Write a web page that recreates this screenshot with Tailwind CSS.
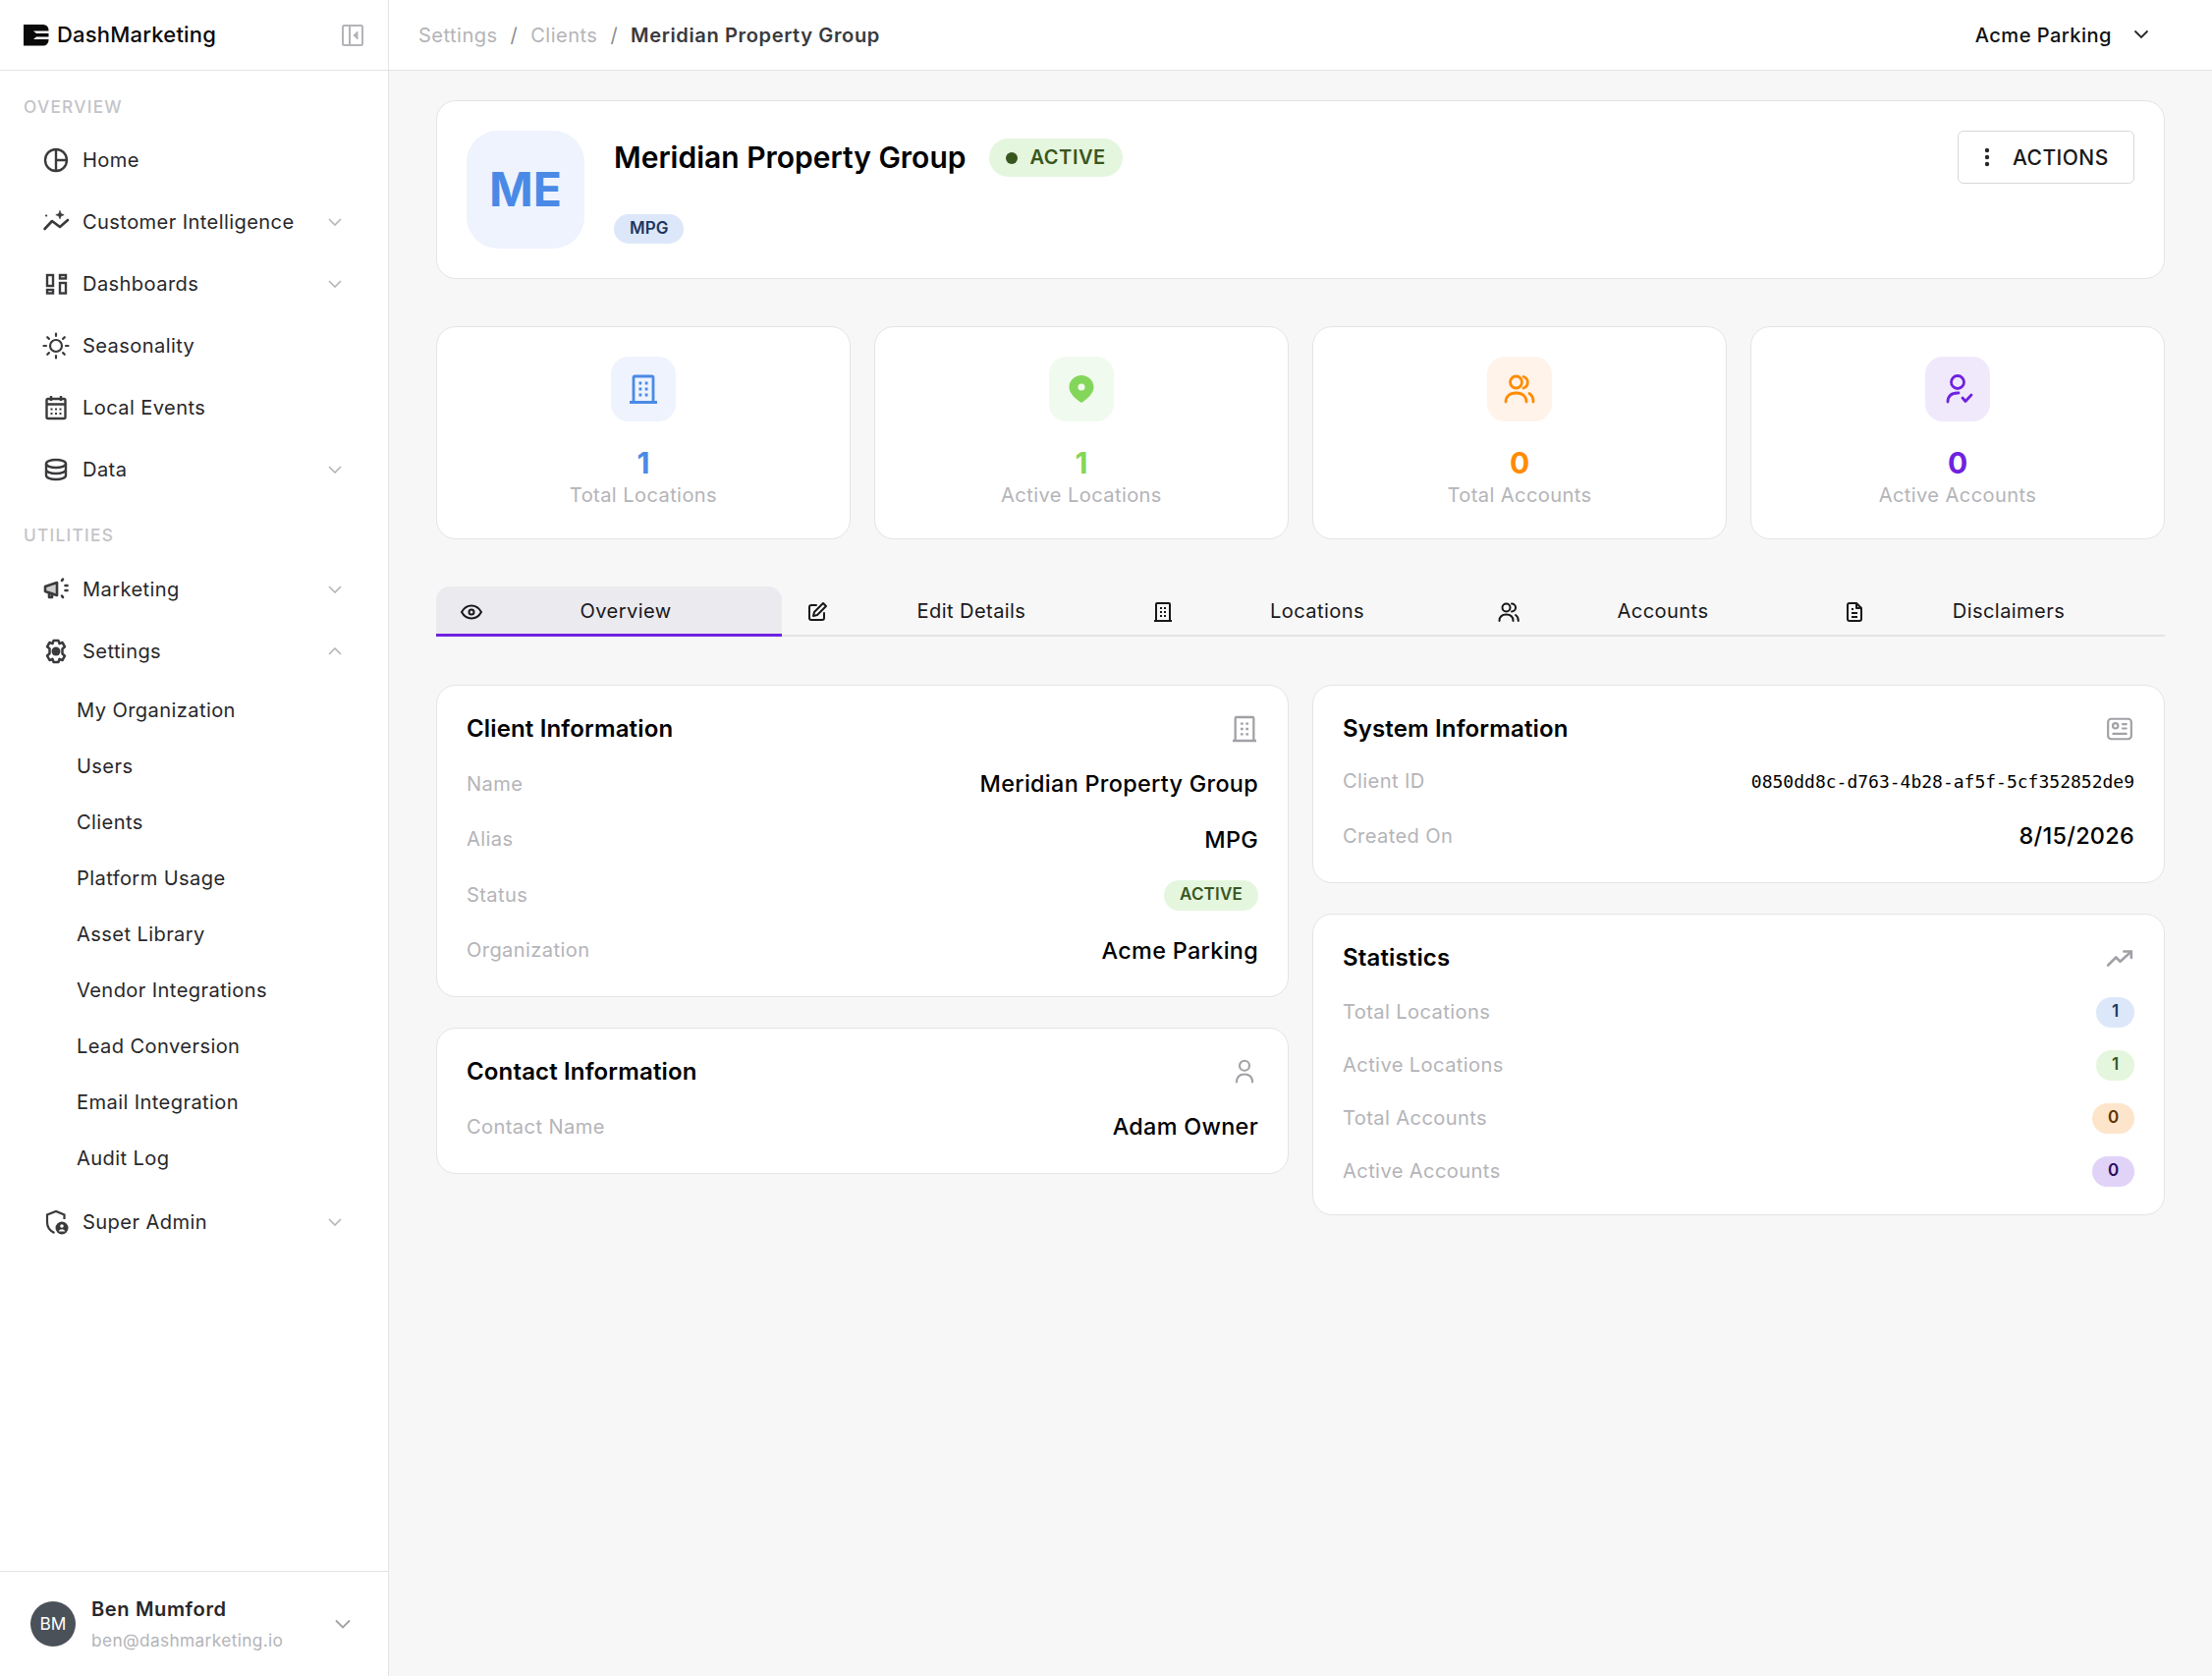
<!DOCTYPE html>
<html lang="en">
<head>
    <meta charset="UTF-8">
    <title>Meridian Property Group</title>
    <script src="https://cdn.jsdelivr.net/npm/@tailwindcss/browser@4"></script>
</head>
<body class="bg-[#f7f7f7] text-black font-['Inter',sans-serif]">
<div class="flex h-[1706px] w-[2252px] overflow-hidden">

    <!-- sidebar -->
    <aside class="w-[396px] shrink-0 bg-white border-r border-[#e4e4e7] flex flex-col">
        <div class="h-[72px] shrink-0 border-b border-[#e4e4e7] flex items-center justify-between pl-[24px] pr-[25px]">
            <div class="flex items-center gap-[8px]">
                <svg width="26" height="22" viewBox="0 0 26 22"><path fill="#0a0a0a" fill-rule="evenodd" d="M0 0h20a5.500 5.500 0 0 1 5.500 5.500V16a5.500 5.500 0 0 1-5.500 5.500H0zM10 6.500h15.500v2.500H13zM13 12.500h12.500V15H10z"/></svg>
                <span class="text-[22px] font-medium tracking-[0.2px] text-[#0a0a0a]">DashMarketing</span>
            </div>
            <svg width="22" height="22" viewBox="0 0 22 22" fill="none" stroke="#b4b4b8" stroke-width="2"><rect x="1" y="1" width="20" height="20" rx="1.500"/><path d="M8 1v20"/><path d="M16 7l-4 4 4 4z" fill="#b4b4b8" stroke-width="1"/></svg>
        </div>

        <nav class="flex-1 text-[#27272a] text-[20.100px] tracking-[0.4px]">
            <div class="mt-[22px] mb-[9px] pl-[24px] h-[28px] leading-[29px] text-[17.300px] tracking-[1.250px] font-medium text-[#c4c4c8]">OVERVIEW</div>

            <div class="h-[63px] flex items-center pl-[43px] pr-[47px]">
                <svg class="w-[28px] h-[28px] shrink-0" viewBox="0 0 28 28" fill="none" stroke="#3a3a3d" stroke-width="2.400"><circle cx="14" cy="14" r="11"/><path d="M14 3v22M14 14h11"/></svg>
                <span class="ml-[13px] mt-[2px]">Home</span>
            </div>
            <div class="h-[63px] flex items-center pl-[43px] pr-[47px]">
                <svg class="w-[28px] h-[28px] shrink-0" viewBox="0 0 28 28" fill="none" stroke="#3a3a3d" stroke-width="2.600" stroke-linecap="round" stroke-linejoin="round"><path d="M2.500 21l7.500-8 8 6 8-7"/><path d="M18 2.500l1.200 3 3 1.200-3 1.200-1.200 3-1.200-3-3-1.200 3-1.200z" fill="#3a3a3d" stroke-width="0.600"/><path d="M4 7.500h.2" stroke-width="2"/></svg>
                <span class="ml-[13px] mt-[2px] flex-1">Customer Intelligence</span>
                <svg width="14" height="8" viewBox="0 0 14 8" fill="none" stroke="#b4b4b8" stroke-width="1.600"><path d="M1 1l6 6 6-6"/></svg>
            </div>
            <div class="h-[63px] flex items-center pl-[43px] pr-[47px]">
                <svg class="w-[28px] h-[28px] shrink-0" viewBox="0 0 28 28" fill="none" stroke="#3a3a3d" stroke-width="2.400"><rect x="5" y="5" width="6" height="11"/><rect x="5" y="20" width="6" height="3.500"/><rect x="18" y="5" width="6" height="3.500"/><rect x="18" y="13" width="6" height="10.500"/></svg>
                <span class="ml-[13px] mt-[2px] flex-1">Dashboards</span>
                <svg width="14" height="8" viewBox="0 0 14 8" fill="none" stroke="#b4b4b8" stroke-width="1.600"><path d="M1 1l6 6 6-6"/></svg>
            </div>
            <div class="h-[63px] flex items-center pl-[43px] pr-[47px]">
                <svg class="w-[28px] h-[28px] shrink-0" viewBox="0 0 28 28" fill="none" stroke="#3a3a3d" stroke-width="2.200" stroke-linecap="round"><circle cx="14" cy="14" r="6"/><path d="M14 1.500v2.500M14 24v2.500M1.500 14H4M24 14h2.500M5.200 5.200l1.700 1.700M21.100 21.100l1.700 1.700M5.200 22.800l1.700-1.700M21.100 6.900l1.700-1.700"/></svg>
                <span class="ml-[13px] mt-[2px]">Seasonality</span>
            </div>
            <div class="h-[63px] flex items-center pl-[43px] pr-[47px]">
                <svg class="w-[28px] h-[28px] shrink-0" viewBox="0 0 28 28" fill="none" stroke="#3a3a3d" stroke-width="2.400"><rect x="4.500" y="5" width="19" height="20" rx="1.500"/><path d="M4.500 10.500h19M9 2v5M19 2v5"/><path d="M8.500 15.500h2M13 15.500h2M17.500 15.500h2M8.500 20h2M13 20h2M17.500 20h2" stroke-width="1.800"/></svg>
                <span class="ml-[13px] mt-[2px]">Local Events</span>
            </div>
            <div class="h-[63px] flex items-center pl-[43px] pr-[47px]">
                <svg class="w-[28px] h-[28px] shrink-0" viewBox="0 0 28 28" fill="none" stroke="#3a3a3d" stroke-width="2.400"><ellipse cx="14" cy="8" rx="10" ry="4"/><path d="M4 8v12c0 2.200 4.500 4 10 4s10-1.800 10-4V8M4 14c0 2.200 4.500 4 10 4s10-1.800 10-4"/></svg>
                <span class="ml-[13px] mt-[2px] flex-1">Data</span>
                <svg width="14" height="8" viewBox="0 0 14 8" fill="none" stroke="#b4b4b8" stroke-width="1.600"><path d="M1 1l6 6 6-6"/></svg>
            </div>

            <div class="mt-[21px] mb-[10px] pl-[24px] h-[28px] leading-[29px] text-[17.300px] tracking-[1.250px] font-medium text-[#c4c4c8]">UTILITIES</div>

            <div class="h-[63px] flex items-center pl-[43px] pr-[47px]">
                <svg class="w-[28px] h-[28px] shrink-0" viewBox="0 0 28 28" fill="none" stroke="#3a3a3d" stroke-width="2.600" stroke-linecap="round" stroke-linejoin="round"><path d="M3 11l12-4v13L3 16z" fill="#3a3a3d" fill-opacity="0.250"/><path d="M7 17v5h3v-4"/><path d="M20 5l1-1.500M23.500 10h2M23.500 15h2M20 20.500l1 1.500"/></svg>
                <span class="ml-[13px] mt-[2px] flex-1">Marketing</span>
                <svg width="14" height="8" viewBox="0 0 14 8" fill="none" stroke="#b4b4b8" stroke-width="1.600"><path d="M1 1l6 6 6-6"/></svg>
            </div>
            <div class="h-[63px] flex items-center pl-[43px] pr-[47px]">
                <svg class="w-[28px] h-[28px] shrink-0" viewBox="0 0 28 28" fill="none" stroke="#3a3a3d" stroke-width="2.500" stroke-linejoin="round"><path d="M11.500 3h5l1 3.200 3-1.200 2.500 4.300-2.500 2.200v5l2.500 2.200L20.500 23l-3-1.200-1 3.200h-5l-1-3.200-3 1.200L5 18.500l2.500-2.200v-5L5 9.300 7.500 5l3 1.200z"/><circle cx="14" cy="14" r="4.500" fill="#3a3a3d" stroke="none"/></svg>
                <span class="ml-[13px] mt-[2px] flex-1">Settings</span>
                <svg width="14" height="8" viewBox="0 0 14 8" fill="none" stroke="#b4b4b8" stroke-width="1.600"><path d="M1 7l6-6 6 6"/></svg>
            </div>
            <div class="h-[57px] flex items-center pl-[78px] pt-[2px]">My Organization</div>
            <div class="h-[57px] flex items-center pl-[78px] pt-[2px]">Users</div>
            <div class="h-[57px] flex items-center pl-[78px] pt-[2px]">Clients</div>
            <div class="h-[57px] flex items-center pl-[78px] pt-[2px]">Platform Usage</div>
            <div class="h-[57px] flex items-center pl-[78px] pt-[2px]">Asset Library</div>
            <div class="h-[57px] flex items-center pl-[78px] pt-[2px]">Vendor Integrations</div>
            <div class="h-[57px] flex items-center pl-[78px] pt-[2px]">Lead Conversion</div>
            <div class="h-[57px] flex items-center pl-[78px] pt-[2px]">Email Integration</div>
            <div class="h-[57px] flex items-center pl-[78px] pt-[2px]">Audit Log</div>
            <div class="mt-[5px] h-[63px] flex items-center pl-[43px] pr-[47px]">
                <svg class="w-[28px] h-[28px] shrink-0" viewBox="0 0 28 28" fill="none" stroke="#3a3a3d" stroke-width="2.200"><path d="M12.500 25C8 23 5 19 5 14V6.500L14 3l8.500 3.500V11"/><circle cx="20" cy="20" r="6.500" fill="#3a3a3d" stroke="none"/><circle cx="20" cy="18" r="1.800" fill="#fff" stroke="none"/><path d="M16.800 23.500c.5-1.500 1.700-2.300 3.200-2.300s2.700.8 3.200 2.300z" fill="#fff" stroke="none"/></svg>
                <span class="ml-[13px] mt-[2px] flex-1">Super Admin</span>
                <svg width="14" height="8" viewBox="0 0 14 8" fill="none" stroke="#b4b4b8" stroke-width="1.600"><path d="M1 1l6 6 6-6"/></svg>
            </div>
        </nav>

        <div class="h-[107px] shrink-0 border-t border-[#e4e4e7] flex items-center pl-[31px] pr-[38px]">
            <div class="w-[46px] h-[46px] rounded-full bg-[#4b5159] text-white text-[17.300px] flex items-center justify-center">BM</div>
            <div class="ml-[16px] flex-1">
                <div class="text-[20.100px] tracking-[0.6px] font-semibold text-[#27272a] leading-[33px]">Ben Mumford</div>
                <div class="text-[17.300px] tracking-[0.36px] text-[#b4b4b8] leading-[30px]">ben@dashmarketing.io</div>
            </div>
            <svg width="16" height="10" viewBox="0 0 16 10" fill="none" stroke="#a1a1a6" stroke-width="1.800"><path d="M1 1.500l7 7 7-7"/></svg>
        </div>
    </aside>

    <div class="flex-1 min-w-0 flex flex-col">
        <!-- top bar -->
        <header class="h-[72px] shrink-0 bg-white border-b border-[#e4e4e7] flex items-center justify-between pl-[30px] pr-[64px] text-[20.100px] tracking-[0.45px]">
            <div class="flex items-center gap-[13px] text-[#b4b4b8] pt-[2px]">
                <span>Settings</span><span class="text-[#8c8c90]">/</span><span>Clients</span><span class="text-[#8c8c90]">/</span><span class="font-semibold text-[#3a3a3d] tracking-[0.6px]">Meridian Property Group</span>
            </div>
            <div class="flex items-center gap-[22px] text-[#111]">
                <span class="font-medium pt-[2px]">Acme Parking</span>
                <svg width="16" height="10" viewBox="0 0 16 10" fill="none" stroke="#27272a" stroke-width="1.800"><path d="M1.500 1.500L8 8l6.500-6.500"/></svg>
            </div>
        </header>

        <main class="px-[48px] pt-[30px]">
            <!-- client header -->
            <section class="h-[182px] bg-white border border-[#e4e4e7] rounded-[20px] pl-[30px] pr-[30px] pt-[30px] flex">
                <div class="w-[120px] h-[120px] rounded-[32px] bg-[#eef3fd] text-[#4a8ae6] text-[48px] font-bold flex items-center justify-center">ME</div>
                <div class="ml-[30px] flex-1">
                    <div class="flex items-center h-[55px] gap-[24px]">
                        <h1 class="text-[30px] font-semibold">Meridian Property Group</h1>
                        <span class="h-[39px] rounded-full bg-[#e5f6de] text-[#38571f] text-[20.100px] tracking-[0.5px] font-semibold px-[17px] flex items-center gap-[12px]"><i class="w-[12px] h-[12px] rounded-full bg-[#38571f]"></i>ACTIVE</span>
                    </div>
                    <span class="mt-[30px] inline-flex items-center h-[30px] px-[16px] rounded-full bg-[#dce8f9] text-[#1f3560] text-[17px] font-semibold">MPG</span>
                </div>
                <button class="w-[180px] h-[54px] border border-[#d8d8dc] rounded-[6px] text-[21px] tracking-[0.45px] font-medium flex items-center pl-[25px] gap-[22px] text-[#18181b]">
                    <svg width="8" height="20" viewBox="0 0 8 20" fill="#27272a"><circle cx="4" cy="3" r="2.200"/><circle cx="4" cy="10" r="2.200"/><circle cx="4" cy="17" r="2.200"/></svg>
                    <span class="pt-[2px]">ACTIONS</span>
                </button>
            </section>

            <!-- stat cards -->
            <section class="mt-[48px] grid grid-cols-4 gap-[24px]">
                <div class="h-[217px] bg-white border border-[#e4e4e7] rounded-[20px] flex flex-col items-center pt-[30px]">
                    <div class="w-[66px] h-[66px] rounded-[18px] bg-[#eef3fd] flex items-center justify-center">
                        <svg width="34" height="34" viewBox="0 0 34 34" fill="none" stroke="#4a8ae6" stroke-width="2.800"><path d="M3 30.500h28M7 30.500V5.500A1.500 1.500 0 0 1 8.500 4h17A1.500 1.500 0 0 1 27 5.500V30.500"/><path d="M12.500 11h2.800M18.700 11h2.800M12.500 17h2.800M18.700 17h2.800M12.500 23h2.800M18.700 23h2.800" stroke-width="2.800"/></svg>
                    </div>
                    <div class="mt-[23px] h-[38px] leading-[38px] text-[30px] font-bold text-[#4a8ae6]">1</div>
                    <div class="h-[26px] leading-[28px] text-[20.100px] tracking-[0.4px] text-[#b4b4b8]">Total Locations</div>
                </div>
                <div class="h-[217px] bg-white border border-[#e4e4e7] rounded-[20px] flex flex-col items-center pt-[30px]">
                    <div class="w-[66px] h-[66px] rounded-[18px] bg-[#f1faee] flex items-center justify-center">
                        <svg width="34" height="34" viewBox="0 0 34 34"><path fill="#84d65a" fill-rule="evenodd" d="M17 3c6.600 0 12.500 5 12.500 12 0 6.500-6.500 12-12.500 16C11 27 4.500 21.500 4.500 15 4.500 8 10.400 3 17 3zm0 8.500a3.500 3.500 0 1 0 0 7 3.500 3.500 0 0 0 0-7z"/></svg>
                    </div>
                    <div class="mt-[23px] h-[38px] leading-[38px] text-[30px] font-bold text-[#84d65a]">1</div>
                    <div class="h-[26px] leading-[28px] text-[20.100px] tracking-[0.4px] text-[#b4b4b8]">Active Locations</div>
                </div>
                <div class="h-[217px] bg-white border border-[#e4e4e7] rounded-[20px] flex flex-col items-center pt-[30px]">
                    <div class="w-[66px] h-[66px] rounded-[18px] bg-[#fff3ea] flex items-center justify-center">
                        <svg width="34" height="34" viewBox="0 0 34 34" fill="none" stroke="#ff8c00" stroke-width="2.800" stroke-linecap="round"><circle cx="13.500" cy="10" r="6"/><path d="M21 4.500a6 6 0 0 1 0 11.500"/><path d="M3 30c0-5.500 4-9 10.500-9S24 24.500 24 30"/><path d="M27 21.500c2.500 1.500 4 4.500 4 8.500"/></svg>
                    </div>
                    <div class="mt-[23px] h-[38px] leading-[38px] text-[30px] font-bold text-[#ff8c00]">0</div>
                    <div class="h-[26px] leading-[28px] text-[20.100px] tracking-[0.4px] text-[#b4b4b8]">Total Accounts</div>
                </div>
                <div class="h-[217px] bg-white border border-[#e4e4e7] rounded-[20px] flex flex-col items-center pt-[30px]">
                    <div class="w-[66px] h-[66px] rounded-[18px] bg-[#f0e9fb] flex items-center justify-center">
                        <svg width="34" height="34" viewBox="0 0 34 34" fill="none" stroke="#6f22e0" stroke-width="2.800" stroke-linecap="round" stroke-linejoin="round"><circle cx="17" cy="10" r="6.500"/><path d="M7 30c0-5.500 3-9 10-9h1"/><path d="M22 26l3 3.500L31 23"/></svg>
                    </div>
                    <div class="mt-[23px] h-[38px] leading-[38px] text-[30px] font-bold text-[#6f22e0]">0</div>
                    <div class="h-[26px] leading-[28px] text-[20.100px] tracking-[0.4px] text-[#b4b4b8]">Active Accounts</div>
                </div>
            </section>

            <!-- tabs -->
            <section class="mt-[48px] grid grid-cols-5 border-b-2 border-[#e4e4e7] h-[51px] text-[20.100px] tracking-[0.4px] text-[#18181b]">
                <div class="flex items-center px-[24px] pt-[3px] bg-[#ebeaef] rounded-t-[14px] border-b-[3px] border-[#6f22e0] h-[51px]">
                    <svg class="w-[24px] shrink-0" height="24" viewBox="0 0 24 24" fill="none" stroke="#18181b" stroke-width="2"><path d="M2 12c2.500-4.500 6-6.500 10-6.500s7.500 2 10 6.500c-2.500 4.500-6 6.500-10 6.500S4.500 16.500 2 12z"/><circle cx="12" cy="12" r="2.500"/></svg>
                    <span class="flex-1 text-center pl-[10px]">Overview</span>
                </div>
                <div class="flex items-center px-[24px]">
                    <svg class="w-[24px] shrink-0" height="24" viewBox="0 0 24 24" fill="none" stroke="#18181b" stroke-width="2" stroke-linecap="round" stroke-linejoin="round"><path d="M11 5H6a2 2 0 0 0-2 2v11a2 2 0 0 0 2 2h11a2 2 0 0 0 2-2v-5"/><path d="M18 3l3 3-9 9-4 1 1-4z"/></svg>
                    <span class="flex-1 text-center pl-[10px]">Edit Details</span>
                </div>
                <div class="flex items-center px-[24px]">
                    <svg class="w-[24px] shrink-0" height="24" viewBox="0 0 24 24" fill="none" stroke="#18181b" stroke-width="2"><path d="M3 21h18M5 21V4a1 1 0 0 1 1-1h12a1 1 0 0 1 1 1v17"/><path d="M9 8h2M13 8h2M9 12h2M13 12h2M9 16h2M13 16h2"/></svg>
                    <span class="flex-1 text-center pl-[10px]">Locations</span>
                </div>
                <div class="flex items-center px-[24px]">
                    <svg class="w-[24px] shrink-0" height="24" viewBox="0 0 24 24" fill="none" stroke="#18181b" stroke-width="2" stroke-linecap="round"><circle cx="9.500" cy="7.500" r="4"/><path d="M15 3.500a4 4 0 0 1 0 8"/><path d="M2.500 21c0-4 2.500-6.500 7-6.500s7 2.500 7 6.500"/><path d="M19 15c1.700 1 2.800 3 2.800 6"/></svg>
                    <span class="flex-1 text-center pl-[10px]">Accounts</span>
                </div>
                <div class="flex items-center px-[24px]">
                    <svg class="w-[24px] shrink-0" height="24" viewBox="0 0 24 24" fill="none" stroke="#18181b" stroke-width="2" stroke-linejoin="round"><path d="M14 3H7a2 2 0 0 0-2 2v14a2 2 0 0 0 2 2h10a2 2 0 0 0 2-2V8z"/><path d="M14 3v5h5M9 9h2M9 13h6M9 17h6"/></svg>
                    <span class="flex-1 text-center pl-[10px]">Disclaimers</span>
                </div>
            </section>

            <!-- detail cards -->
            <section class="mt-[49px] grid grid-cols-2 gap-x-[24px] items-start">
                <div class="flex flex-col gap-[31px]">
                    <div class="h-[318px] bg-white border border-[#e4e4e7] rounded-[20px] px-[30px] pt-[28px]">
                        <div class="flex items-center justify-between h-[32px]">
                            <h2 class="text-[24px] font-semibold tracking-[0.15px]">Client Information</h2>
                            <svg class="-mr-[2px]" width="32" height="32" viewBox="0 0 24 24" fill="none" stroke="#a1a1a6" stroke-width="1.700"><path d="M3 21h18M5 21V4a1 1 0 0 1 1-1h12a1 1 0 0 1 1 1v17"/><path d="M9 8h2M13 8h2M9 12h2M13 12h2M9 16h2M13 16h2"/></svg>
                        </div>
                        <div class="mt-[12px] h-[56px] flex items-center justify-between"><span class="text-[20.100px] tracking-[0.4px] text-[#b4b4b8]">Name</span><span class="text-[23.400px] tracking-[0.3px] font-medium">Meridian Property Group</span></div>
                        <div class="h-[57px] flex items-center justify-between"><span class="text-[20.100px] tracking-[0.4px] text-[#b4b4b8]">Alias</span><span class="text-[23.400px] tracking-[0.3px] font-medium">MPG</span></div>
                        <div class="h-[56px] flex items-center justify-between"><span class="text-[20.100px] tracking-[0.4px] text-[#b4b4b8]">Status</span><span class="h-[31px] px-[16px] flex items-center rounded-full bg-[#e5f6de] text-[#38571f] text-[17px] tracking-[0.2px] font-semibold">ACTIVE</span></div>
                        <div class="h-[57px] flex items-center justify-between"><span class="text-[20.100px] tracking-[0.4px] text-[#b4b4b8]">Organization</span><span class="text-[23.400px] tracking-[0.3px] font-medium">Acme Parking</span></div>
                    </div>
                    <div class="h-[149px] bg-white border border-[#e4e4e7] rounded-[20px] px-[30px] pt-[28px]">
                        <div class="flex items-center justify-between h-[32px]">
                            <h2 class="text-[24px] font-semibold tracking-[0.15px]">Contact Information</h2>
                            <svg class="-mr-[1px]" width="30" height="30" viewBox="0 0 24 24" fill="none" stroke="#a1a1a6" stroke-width="1.700"><circle cx="12" cy="7" r="4"/><path d="M5.500 21c0-4.500 2.500-7 6.500-7s6.500 2.500 6.500 7"/></svg>
                        </div>
                        <div class="mt-[12px] h-[56px] flex items-center justify-between"><span class="text-[20.100px] tracking-[0.4px] text-[#b4b4b8]">Contact Name</span><span class="text-[23.400px] tracking-[0.3px] font-medium">Adam Owner</span></div>
                    </div>
                </div>
                <div class="flex flex-col gap-[31px]">
                    <div class="h-[202px] bg-white border border-[#e4e4e7] rounded-[20px] px-[30px] pt-[28px]">
                        <div class="flex items-center justify-between h-[32px]">
                            <h2 class="text-[24px] font-semibold tracking-[0.15px]">System Information</h2>
                            <svg class="mr-[1px]" width="28" height="28" viewBox="0 0 26 26" fill="none" stroke="#a1a1a6" stroke-width="2"><rect x="2" y="3.500" width="22" height="19" rx="3"/><circle cx="9" cy="10" r="2.500"/><path d="M15 8.500h5M15 12.500h5M6 17.500h14"/></svg>
                        </div>
                        <div class="mt-[9px] h-[56px] flex items-center justify-between"><span class="text-[20.100px] tracking-[0.4px] text-[#b4b4b8]">Client ID</span><span class="text-[18px] font-['DejaVu_Sans_Mono',monospace]">0850dd8c-d763-4b28-af5f-5cf352852de9</span></div>
                        <div class="h-[56px] flex items-center justify-between"><span class="text-[20.100px] tracking-[0.4px] text-[#b4b4b8]">Created On</span><span class="text-[23.400px] tracking-[0.3px] font-medium">8/15/2026</span></div>
                    </div>
                    <div class="h-[307px] bg-white border border-[#e4e4e7] rounded-[20px] px-[30px] pt-[28px]">
                        <div class="flex items-center justify-between h-[32px]">
                            <h2 class="text-[24px] font-semibold tracking-[0.15px]">Statistics</h2>
                            <svg class="mr-[1px]" width="28" height="28" viewBox="0 0 26 26" fill="none" stroke="#a1a1a6" stroke-width="2.400" stroke-linecap="round" stroke-linejoin="round"><path d="M2 20l7.500-7.500 4 4L24 7"/><path d="M17 7h7v6"/></svg>
                        </div>
                        <div class="mt-[12px] h-[54px] flex items-center justify-between"><span class="text-[20.100px] tracking-[0.4px] text-[#b4b4b8]">Total Locations</span><span class="h-[31px] min-w-[39px] flex items-center justify-center rounded-full bg-[#dce8f9] text-[#1f3560] text-[17px] font-semibold">1</span></div>
                        <div class="h-[54px] flex items-center justify-between"><span class="text-[20.100px] tracking-[0.4px] text-[#b4b4b8]">Active Locations</span><span class="h-[31px] min-w-[39px] flex items-center justify-center rounded-full bg-[#e5f6de] text-[#38571f] text-[17px] font-semibold">1</span></div>
                        <div class="h-[54px] flex items-center justify-between"><span class="text-[20.100px] tracking-[0.4px] text-[#b4b4b8]">Total Accounts</span><span class="h-[31px] min-w-[43px] flex items-center justify-center rounded-full bg-[#fde5cc] text-[#5e3300] text-[17px] font-semibold">0</span></div>
                        <div class="h-[54px] flex items-center justify-between"><span class="text-[20.100px] tracking-[0.4px] text-[#b4b4b8]">Active Accounts</span><span class="h-[31px] min-w-[43px] flex items-center justify-center rounded-full bg-[#e1d3f8] text-[#2a0d5c] text-[17px] font-semibold">0</span></div>
                    </div>
                </div>
            </section>
        </main>
    </div>
</div>
</body>
</html>
